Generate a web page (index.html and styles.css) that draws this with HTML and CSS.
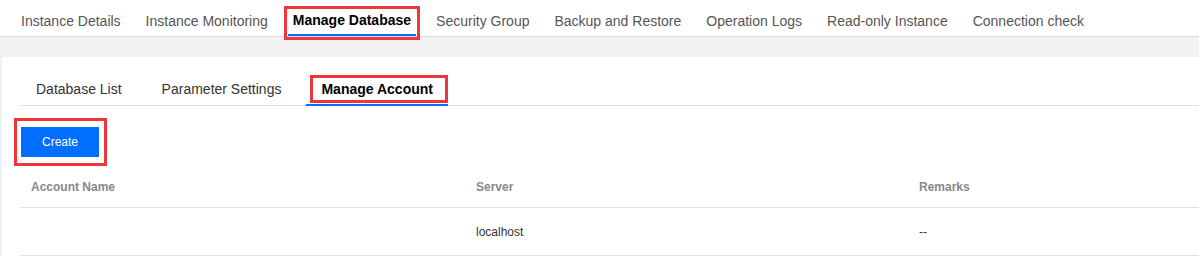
FILE: index.html
```html
<!DOCTYPE html>
<html lang="en">

<head>
  <meta charset="UTF-8">
  <title>Manage Account</title>
  <link rel="stylesheet" href="styles.css">
</head>

<body>
  <!-- INSTANCE TABS -->
  <nav class="topnav">
    <a class="topnav__tab">Instance Details</a>
    <a class="topnav__tab">Instance Monitoring</a>
    <a class="topnav__tab topnav__tab--active">Manage Database<span class="mark mark--top"></span></a>
    <a class="topnav__tab">Security Group</a>
    <a class="topnav__tab">Backup and Restore</a>
    <a class="topnav__tab">Operation Logs</a>
    <a class="topnav__tab">Read-only Instance</a>
    <a class="topnav__tab">Connection check</a>
  </nav>

  <main class="page">
    <section class="panel">
      <div class="subtabs">
        <a class="subtabs__tab">Database List</a>
        <a class="subtabs__tab">Parameter Settings</a>
        <a class="subtabs__tab subtabs__tab--active">Manage Account<span class="mark mark--sub"></span></a>
      </div>

      <div class="toolbar">
        <button class="btn btn--primary">Create<span class="mark mark--btn"></span></button>
      </div>

      <div class="table">
        <div class="table__row table__row--head">
          <div class="table__cell">Account Name</div>
          <div class="table__cell">Server</div>
          <div class="table__cell">Remarks</div>
        </div>
        <div class="table__row">
          <div class="table__cell"></div>
          <div class="table__cell">localhost</div>
          <div class="table__cell">--</div>
        </div>
      </div>
    </section>
  </main>
</body>

</html>
```

FILE: styles.css
```css
:root {
  --textColor: #333;
  --navTextColor: #555;
  --mutedColor: #888;
  --lineColor: #ddd;
  --pageBgColor: #f2f2f2;
  --primaryColor: #006eff;
  --markColor: #f0353b;
}

* {
  box-sizing: border-box;
}

body {
  margin: 0;
  font-family: "Liberation Sans", Arial, sans-serif;
  font-size: 14px;
  color: var(--textColor);
  background: #fff;
  overflow: hidden;
}

a {
  color: inherit;
  text-decoration: none;
}

/* annotation boxes drawn over the active items */
.mark {
  position: absolute;
  border: 3px solid var(--markColor);
  pointer-events: none;
}

.mark--top {
  top: 6px;
  bottom: -6px;
  left: -4px;
  right: -4px;
}

.mark--sub {
  top: 3px;
  bottom: 1px;
  left: 4px;
  right: 0;
}

.mark--btn {
  top: -9px;
  bottom: -9px;
  left: -7px;
  right: -8px;
}

.topnav {
  display: flex;
  gap: 15px;
  height: 37px;
  padding-left: 16px;
  border-bottom: 1px solid var(--lineColor);
  white-space: nowrap;
}

.topnav__tab {
  position: relative;
  height: 36px;
  padding: 6px 5px 0;
  line-height: 30px;
  color: var(--navTextColor);
  border-bottom: 2px solid transparent;
}

.topnav__tab--active {
  color: #000;
  font-weight: 700;
  line-height: 28px;
  border-bottom-color: var(--primaryColor);
}

.page {
  background: var(--pageBgColor);
  padding: 20px 0 0 2px;
}

.panel {
  background: #fff;
  padding: 15px 0 0 19px;
}

.subtabs {
  display: flex;
  gap: 10px;
  border-bottom: 1px solid var(--lineColor);
  white-space: nowrap;
}

.subtabs__tab {
  position: relative;
  padding: 3px 15px 0;
  line-height: 29px;
  border-bottom: 2px solid transparent;
  margin-bottom: -1px;
}

.subtabs__tab--active {
  font-weight: 700;
  color: #000;
  border-bottom-color: var(--primaryColor);
}

.toolbar {
  padding-top: 21px;
}

.btn {
  position: relative;
  height: 30px;
  width: 78px;
  border: 0;
  padding: 0;
  font: inherit;
  font-size: 12px;
  cursor: pointer;
}

.btn--primary {
  background: var(--primaryColor);
  color: #fff;
}

.table {
  margin-top: 10px;
  font-size: 12px;
}

.table__row {
  display: grid;
  grid-template-columns: 445px 443px 1fr;
  height: 48px;
  align-items: center;
  border-bottom: 1px solid var(--lineColor);
}

.table__row--head {
  height: 41px;
  font-weight: 700;
  color: var(--mutedColor);
}

.table__cell {
  padding: 0 10px;
}
```
